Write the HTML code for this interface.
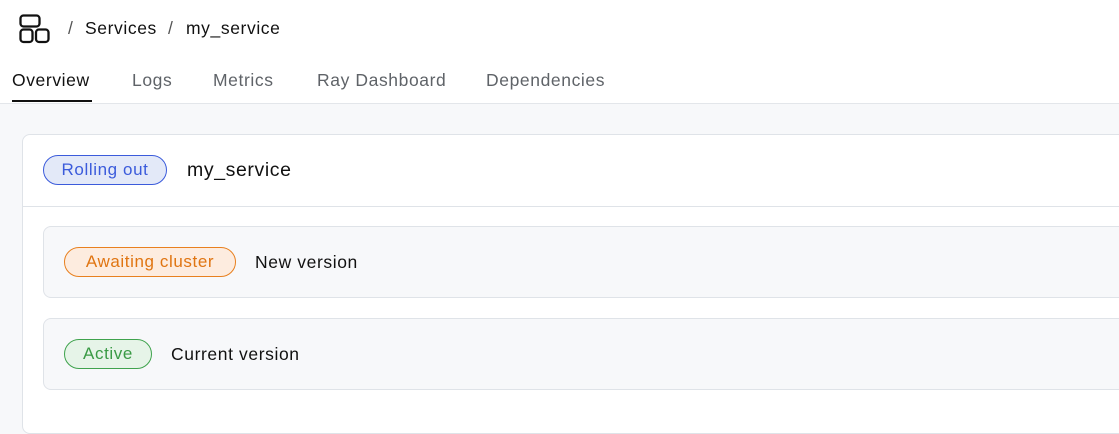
<!DOCTYPE html>
<html><head><style>
*{box-sizing:border-box;margin:0;padding:0}
html,body{width:1119px;height:400px;overflow:hidden}
body{background:#f7f8fa;font-family:"Liberation Sans",sans-serif;color:#111;letter-spacing:0.6px}
.top{background:#fff;height:104px;border-bottom:1px solid #e3e6ea;position:relative}
.crumb{position:absolute;top:18px;left:68px;font-size:17.5px;color:#111}
.crumb span{position:absolute;white-space:nowrap}
.crumb .s{color:#555}
.tabs{position:absolute;top:70px;left:12px;font-size:17.5px;color:#5f6368}
.tabs span{position:absolute;white-space:nowrap}
.tabs .a{color:#111}
.ul{position:absolute;left:12px;top:100px;width:80px;height:2px;background:#111}
.card{position:absolute;left:22px;top:134px;width:1120px;height:300px;background:#fff;border:1px solid #dfe3e8;border-radius:8px}
.hd{height:72px;border-bottom:1px solid #dfe3e8;position:relative}
.pill{position:absolute;height:30px;border-radius:15px;font-size:17px;line-height:28px;text-align:center;border:1px solid;white-space:nowrap}
.title{position:absolute;font-size:19.5px;top:24px;left:164px}
.inner{position:absolute;left:20px;width:1100px;height:72px;background:#f7f8fa;border:1px solid #dfe3e8;border-radius:8px}
.lbl{position:absolute;font-size:17.5px;top:25px}
</style></head><body>
<div class="top">
<svg style="position:absolute;left:18px;top:13px" width="33" height="31" viewBox="0 0 33 31" fill="none" stroke="#111" stroke-width="2.3"><rect x="2.5" y="2.5" width="19" height="11" rx="3"/><rect x="2.5" y="16.5" width="12" height="12.5" rx="3"/><rect x="18" y="16.5" width="12.5" height="12.5" rx="3"/></svg>
<div class="crumb"><span class="s" style="left:0">/</span><span style="left:17px">Services</span><span class="s" style="left:100px">/</span><span style="left:118px">my_service</span></div>
<div class="tabs"><span class="a" style="left:0">Overview</span><span style="left:120px">Logs</span><span style="left:201px">Metrics</span><span style="left:305px">Ray Dashboard</span><span style="left:474px">Dependencies</span></div>
<div class="ul"></div>
</div>
<div class="card">
<div class="hd"><div class="pill" style="left:20px;top:20px;width:124px;background:#e3e9f8;border-color:#3b5bdb;color:#3b5bdb">Rolling out</div><div class="title">my_service</div></div>
<div class="inner" style="top:91px"><div class="pill" style="left:20px;top:20px;width:172px;background:#fdecdf;border-color:#e8801f;color:#e07512">Awaiting cluster</div><div class="lbl" style="left:211px">New version</div></div>
<div class="inner" style="top:183px"><div class="pill" style="left:20px;top:20px;width:88px;background:#e6f4e8;border-color:#3fa34d;color:#3a9a45">Active</div><div class="lbl" style="left:127px">Current version</div></div>
</div>
</body></html>
